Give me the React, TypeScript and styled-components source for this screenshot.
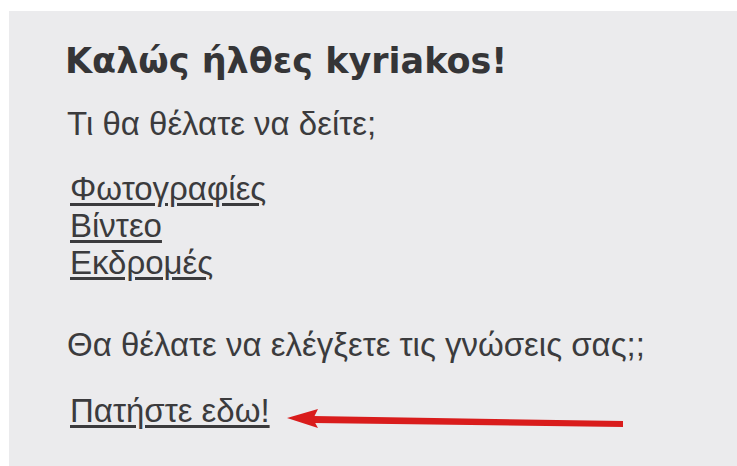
import styled, { createGlobalStyle } from 'styled-components';

const GlobalStyle = createGlobalStyle`
  html, body {
    margin: 0;
    padding: 0;
    background: #ffffff;
  }
`;

const menuLinks = ['Φωτογραφίες', 'Βίντεο', 'Εκδρομές'];

// red pointer that sits beside the quiz link
const PointerArrow = () => (
  <ArrowSvg width="345" height="26" viewBox="0 0 345 26">
    <path d="M28 10 L338 15 L338 21 L28 17 Z" fill="#d91c1c" />
    <path d="M2 12 L33 3 L28 13 L33 22 Z" fill="#d91c1c" />
  </ArrowSvg>
);

const App = () => {
  return (
    <>
      <GlobalStyle />
      <Panel>
        <Title>Καλώς ήλθες kyriakos!</Title>
        <Prompt>Τι θα θέλατε να δείτε;</Prompt>
        <LinkList>
          {menuLinks.map((label) => (
            <MenuLink key={label} href="#">
              {label}
            </MenuLink>
          ))}
        </LinkList>
        <Prompt $spaced>Θα θέλατε να ελέγξετε τις γνώσεις σας;;</Prompt>
        <ActionRow>
          <MenuLink href="#">Πατήστε εδω!</MenuLink>
          <PointerArrow />
        </ActionRow>
      </Panel>
    </>
  );
};

export default App;

const Panel = styled.div`
  margin: 11px 0 0 9px;
  min-height: 455px;
  box-sizing: border-box;
  padding: 30px 0 0 56px;
  background: #ebebed;
  color: #3b3b3d;
  font-family: 'Liberation Sans', Arial, sans-serif;
`;

const Title = styled.h1`
  margin: 0;
  font-family: 'DejaVu Sans', 'Noto Sans', sans-serif;
  font-size: 35px;
  font-weight: 700;
  line-height: 40px;
  color: #353537;
`;

const Prompt = styled.p<{ $spaced?: boolean }>`
  margin: ${({ $spaced }) => ($spaced ? '45px' : '24px')} 0 0 2px;
  font-size: 33px;
  line-height: 37px;
`;

const LinkList = styled.nav`
  display: flex;
  flex-direction: column;
  align-items: flex-start;
  margin-top: 28px;
`;

const MenuLink = styled.a`
  margin-left: 5px;
  font-size: 33px;
  line-height: 37px;
  color: #3b3b3d;
  text-decoration: underline;
  text-underline-offset: 3px;
`;

const ActionRow = styled.div`
  display: flex;
  align-items: flex-start;
  margin-top: 29px;
`;

const ArrowSvg = styled.svg`
  display: block;
  flex-shrink: 0;
  margin: 14px 0 0 15px;
`;
